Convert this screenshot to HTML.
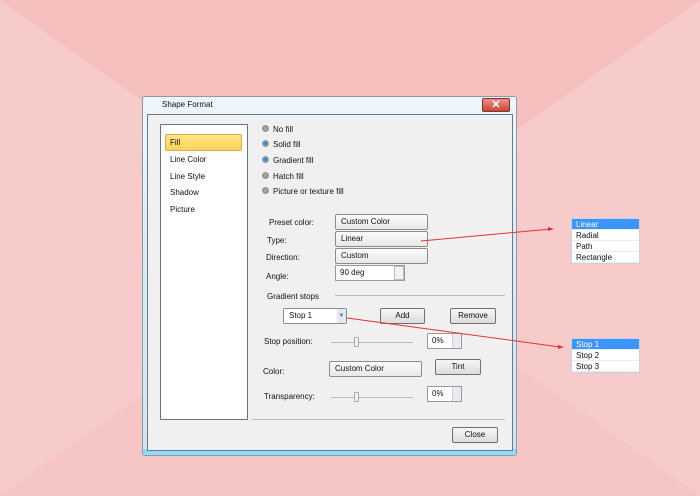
<!DOCTYPE html>
<html><head><style>
*{margin:0;padding:0;box-sizing:border-box}
body{width:700px;height:496px;overflow:hidden;position:relative;font-family:"Liberation Sans",sans-serif;font-size:8px;color:#111;background:#f6cbca}
.a{position:absolute}
.dlg{left:142px;top:96px;width:375px;height:360px;border:1px solid #8a9aa8;border-radius:3px;background:linear-gradient(#eef6fc,#dcebf6 40%,#cfe4f2);}
.in{left:147px;top:114px;width:366px;height:337px;background:#f0f0f0;border:1px solid #6b7a88;}
.blue{left:143px;top:449px;width:373px;height:6px;background:#8fdcf6;border-radius:0 0 3px 3px}
.list{left:160px;top:124px;width:88px;height:296px;background:#fff;border:1px solid #6b7580}
.sel{left:165px;top:134px;width:77px;height:17px;background:linear-gradient(#ffe58a,#fcd45a);border:1px solid #d9ad45;border-radius:2px}
.cb{background:linear-gradient(#fbfbfb,#e8e8e8);border:1px solid #8c8c8c;border-radius:2px;padding-left:5px;line-height:13px}
.bt{background:linear-gradient(#f6f6f6,#dcdcdc);border:1px solid #707070;border-radius:2px;text-align:center;line-height:13px}
.r{width:7px;height:7px;border-radius:50%;background:radial-gradient(#aaa 30%,#888 70%);border:1px solid #999}
.r.on{background:radial-gradient(#2a8ad8 35%,#8ab 75%)}
.spin{background:#fff;border:1px solid #999;padding-left:4px;line-height:14px}
.dd{background:#fff;border:1px solid #c8d4e4;width:69px}
.dd div{height:11px;line-height:11px;padding-left:4px;border-bottom:1px solid #eee}
.dd .h{background:#3c95ff;color:#fff}
.sl{height:1px;background:#bbb}
</style></head><body>
<svg class="a" style="left:0;top:0" width="700" height="496">
<polygon points="0,0 700,0 350,248" fill="#f4bfbd"/>
<polygon points="0,496 700,496 350,248" fill="#f6c6c5"/>
</svg>
<div class="a dlg"></div>
<div class="a" style="left:162px;top:100px">Shape Format</div>
<div class="a" style="left:482px;top:98px;width:28px;height:14px;background:linear-gradient(#e8938a,#c7483a);border:1px solid #8e2d25;border-radius:2px;color:#fff;text-align:center;font-size:11px;line-height:12px;font-weight:bold">✕</div>
<div class="a blue"></div>
<div class="a in"></div>
<div class="a list"></div>
<div class="a sel"></div>
<div class="a" style="left:170px;top:138px">Fill</div>
<div class="a" style="left:170px;top:155px">Line Color</div>
<div class="a" style="left:170px;top:172px">Line Style</div>
<div class="a" style="left:170px;top:188px">Shadow</div>
<div class="a" style="left:170px;top:205px">Picture</div>

<div class="a r" style="left:262px;top:125px"></div><div class="a" style="left:273px;top:125px">No fill</div>
<div class="a r on" style="left:262px;top:140px"></div><div class="a" style="left:273px;top:140px">Solid fill</div>
<div class="a r on" style="left:262px;top:156px"></div><div class="a" style="left:273px;top:156px">Gradient fill</div>
<div class="a r" style="left:262px;top:172px"></div><div class="a" style="left:273px;top:172px">Hatch fill</div>
<div class="a r" style="left:262px;top:187px"></div><div class="a" style="left:273px;top:187px">Picture or texture fill</div>

<div class="a" style="left:269px;top:218px">Preset color:</div>
<div class="a" style="left:267px;top:236px">Type:</div>
<div class="a" style="left:266px;top:253px">Direction:</div>
<div class="a" style="left:266px;top:272px">Angle:</div>
<div class="a cb" style="left:335px;top:214px;width:93px;height:16px">Custom Color</div>
<div class="a cb" style="left:335px;top:231px;width:93px;height:16px">Linear</div>
<div class="a cb" style="left:335px;top:248px;width:93px;height:16px">Custom</div>
<div class="a spin" style="left:335px;top:265px;width:70px;height:16px">90 deg</div>
<div class="a" style="left:394px;top:266px;width:10px;height:14px;border:1px solid #bbb;background:#f2f2f2"></div>

<div class="a" style="left:267px;top:292px">Gradient stops</div>
<div class="a sl" style="left:335px;top:295px;width:170px"></div>
<div class="a cb" style="left:283px;top:308px;width:64px;height:16px;background:#fff">Stop 1</div>
<div class="a" style="left:337px;top:309px;width:9px;height:14px;background:#e4e8f0;color:#6270a0;font-size:6px;text-align:center;line-height:14px">▼</div>
<div class="a bt" style="left:380px;top:308px;width:45px;height:16px">Add</div>
<div class="a bt" style="left:450px;top:308px;width:46px;height:16px">Remove</div>

<div class="a" style="left:264px;top:337px">Stop position:</div>
<div class="a sl" style="left:331px;top:342px;width:82px"></div>
<div class="a" style="left:354px;top:337px;width:5px;height:10px;background:#f4f4f4;border:1px solid #aaa;border-radius:1px"></div>
<div class="a spin" style="left:427px;top:333px;width:35px;height:16px">0%</div>
<div class="a" style="left:452px;top:334px;width:9px;height:14px;background:#e8ecf2;border-left:1px solid #ccc"></div>

<div class="a" style="left:263px;top:367px">Color:</div>
<div class="a cb" style="left:329px;top:361px;width:93px;height:16px">Custom Color</div>
<div class="a bt" style="left:435px;top:359px;width:46px;height:16px">Tint</div>

<div class="a" style="left:264px;top:392px">Transparency:</div>
<div class="a sl" style="left:331px;top:397px;width:82px"></div>
<div class="a" style="left:354px;top:392px;width:5px;height:10px;background:#f4f4f4;border:1px solid #aaa;border-radius:1px"></div>
<div class="a spin" style="left:427px;top:386px;width:35px;height:16px">0%</div>
<div class="a" style="left:452px;top:387px;width:9px;height:14px;background:#e8ecf2;border-left:1px solid #ccc"></div>

<div class="a sl" style="left:252px;top:419px;width:253px"></div>
<div class="a bt" style="left:452px;top:427px;width:46px;height:16px">Close</div>

<div class="a dd" style="left:571px;top:218px"><div class="h">Linear</div><div>Radial</div><div>Path</div><div>Rectangle</div></div>
<div class="a dd" style="left:571px;top:338px"><div class="h">Stop 1</div><div>Stop 2</div><div>Stop 3</div></div>

<svg class="a" style="left:0;top:0" width="700" height="496">
<line x1="421" y1="241" x2="551" y2="229" stroke="#e83030" stroke-width="1"/>
<polygon points="554,229 548,227 548,231" fill="#e83030"/>
<line x1="347" y1="318" x2="560" y2="347" stroke="#e83030" stroke-width="1"/>
<polygon points="564,347 558,345 558,349" fill="#e83030"/>
</svg>
</body></html>
